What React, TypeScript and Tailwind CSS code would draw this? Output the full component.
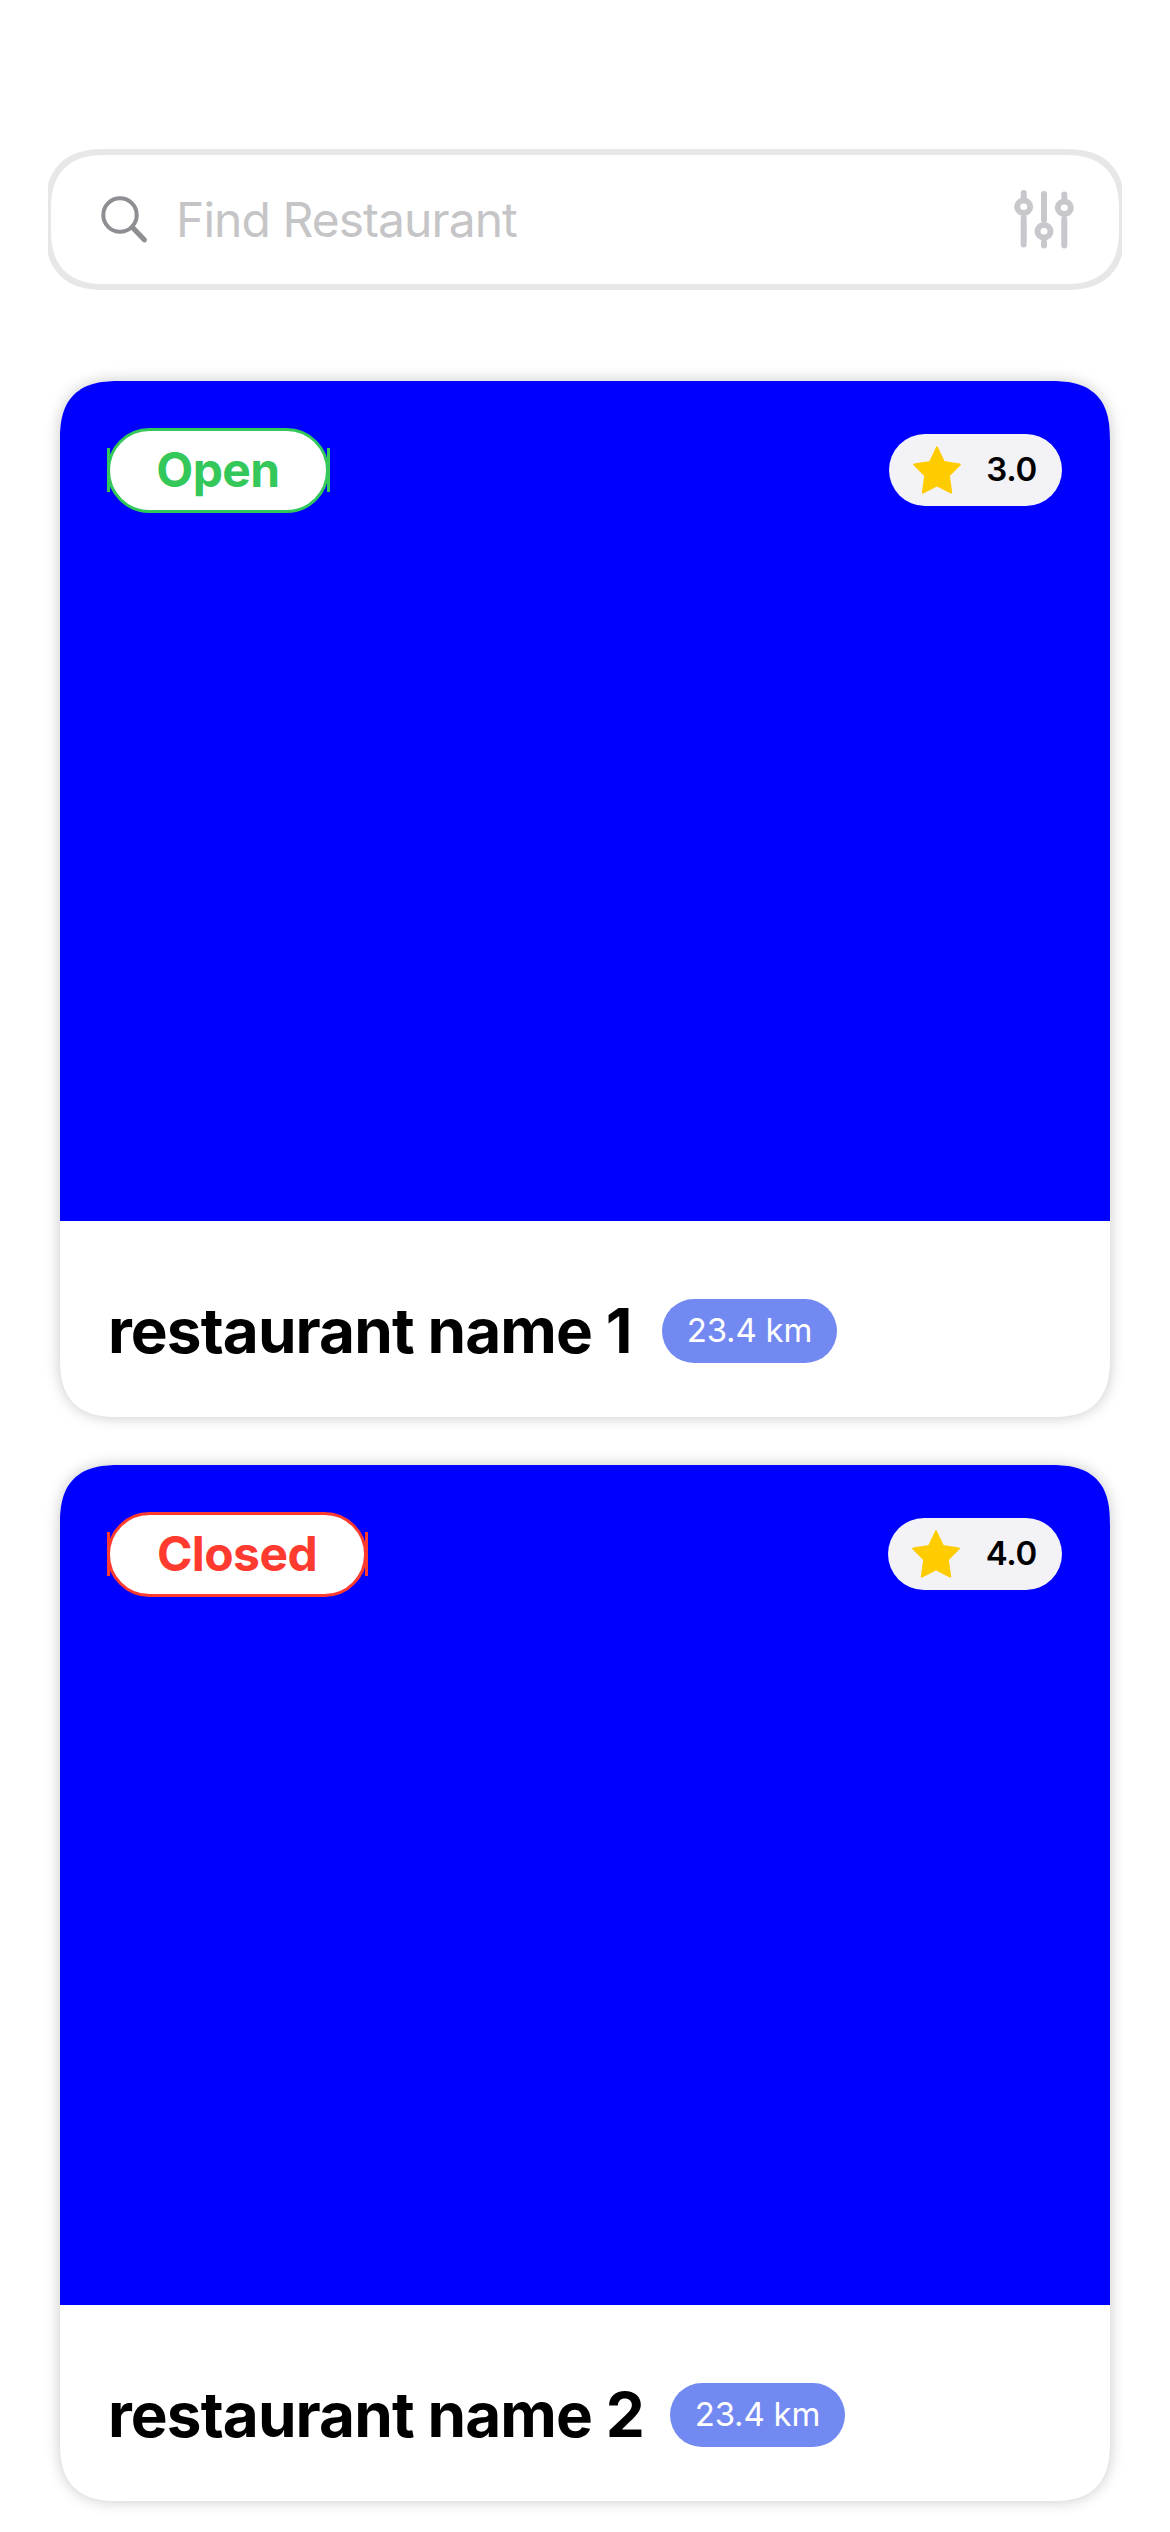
const font = { fontFamily: 'Inter, "Liberation Sans", sans-serif' };

function SearchIcon() {
  return (
    <svg className="h-[48px] w-[48px]" viewBox="0 0 48 48" fill="none" stroke="#8e8e93">
      <circle cx="19" cy="19" r="16.7" strokeWidth="4" />
      <path d="M31.5 31.5L43.3 43.8" strokeWidth="5.2" strokeLinecap="round" />
    </svg>
  );
}

function SlidersIcon() {
  return (
    <svg className="h-[60px] w-[60px]" viewBox="0 0 60 60" fill="none" stroke="#c7c7cc" strokeLinecap="round">
      <path strokeWidth="6" d="M9.7 3V7M9.7 28V54.5M30 4V30M30 52V55.5M50.3 4.5V8M50.3 29V55.5" />
      <g strokeWidth="6">
        <ellipse cx="9.7" cy="16.8" rx="6.5" ry="6.2" />
        <ellipse cx="30" cy="41.3" rx="6.5" ry="6.2" />
        <ellipse cx="50.3" cy="17.8" rx="6.5" ry="6.2" />
      </g>
    </svg>
  );
}

function StarIcon() {
  return (
    <svg className="h-[48px] w-[48px]" viewBox="0 0 48 48" fill="#ffcc00" stroke="#ffcc00" strokeWidth="2" strokeLinejoin="round">
      <path d="M24 1.4L31 16.1L46.8 18.6L35.8 29.6L38.2 46.6L24 39.3L9.8 46.6L12.2 29.6L1.2 18.6L17 16.1Z" />
    </svg>
  );
}

type Restaurant = { name: string; open: boolean; rating: string; nameWidth: string; ratingWidth: string };

const restaurants: Restaurant[] = [
  { name: "restaurant name 1", open: true, rating: "3.0", nameWidth: "w-[530px]", ratingWidth: "w-[173px]" },
  { name: "restaurant name 2", open: false, rating: "4.0", nameWidth: "w-[538px]", ratingWidth: "w-[174px]" },
];

function StatusBadge({ open }: { open: boolean }) {
  const tone = open ? "w-[222px] border-[#34c759] text-[#34c759]" : "w-[260px] border-[#ff3b30] text-[#ff3b30]";
  const tick = open ? "bg-[#34c759]" : "bg-[#ff3b30]";
  return (
    <div className="relative">
      <span className={`absolute -left-[1.5px] top-[20px] h-[44px] w-[3px] ${tick}`} />
      <span className={`absolute -right-[1.5px] top-[20px] h-[44px] w-[3px] ${tick}`} />
      <div className={`relative -mx-px flex h-[85px] items-center justify-center rounded-[43px] border-[3px] bg-white pb-[2px] text-[48px] font-bold tracking-[-0.6px] ${tone}`}>
        {open ? "Open" : "Closed"}
      </div>
    </div>
  );
}

function RestaurantCard({ r }: { r: Restaurant }) {
  return (
    <article className="h-[1036px] w-[1050px] overflow-hidden rounded-[60px] bg-white shadow-[0_0_15px_rgba(0,0,0,0.22)] [corner-shape:superellipse(1.4)]">
      <div className="flex h-[840px] items-start justify-between bg-[#0000ff] px-[48px] pt-[47px]">
        <StatusBadge open={r.open} />
        <div className={`mt-[6px] flex h-[72px] items-center justify-between rounded-[36px] bg-[#f2f2f7] pl-[24px] pr-[25px] ${r.ratingWidth}`}>
          <StarIcon />
          <span className="text-[33px] font-semibold tracking-[-0.3px]">{r.rating}</span>
        </div>
      </div>
      <div className="flex h-[196px] items-center px-[48px] pt-[24px]">
        <h2 className={`whitespace-nowrap pb-[2px] text-[62px] font-bold tracking-[-0.9px] ${r.nameWidth}`}>{r.name}</h2>
        <span className="ml-[24px] flex h-[64px] w-[175px] items-center justify-center rounded-[32px] bg-[#7289f2] pb-px text-[33px] tracking-[-0.2px] text-white">
          23.4 km
        </span>
      </div>
    </article>
  );
}

export default function App() {
  return (
    <main className="flex h-[2532px] w-[1170px] flex-col items-center overflow-hidden bg-white" style={font}>
      <div className="mt-[149px] w-[1074px] shrink-0 overflow-hidden">
        <div className="-mx-[3px] flex h-[141px] items-center rounded-[60px] border-[6px] border-[#e7e7e7] pl-[50px] pr-[45px] [corner-shape:superellipse(1.3)]">
          <SearchIcon />
          <span className="ml-[27px] flex-1 text-[48px] tracking-[-0.95px] text-[#c5c5c7]">Find Restaurant</span>
          <SlidersIcon />
        </div>
      </div>
      <section className="mt-[91px] flex flex-col gap-[48px]">
        {restaurants.map((r) => (
          <RestaurantCard key={r.name} r={r} />
        ))}
      </section>
    </main>
  );
}
